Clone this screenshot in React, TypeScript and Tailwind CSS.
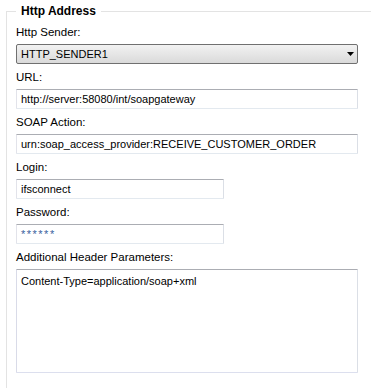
const font = { fontFamily: '"Liberation Sans", Arial, sans-serif' };

const Label = ({ text }: { text: string }) => (
  <div className="h-4 mb-1 text-[11.5px] leading-4 text-black">{text}</div>
);

const TextBox = ({ value, className = "" }: { value: string; className?: string }) => (
  <div
    className={`h-5 mb-[5px] box-border border border-t-[#abadb3] border-l-[#e2e3ea] border-r-[#dbdfe6] border-b-[#e3e9ef] rounded-[1px] bg-white pl-[4px] text-[11px] leading-[18px] text-black whitespace-nowrap overflow-hidden ${className}`}
  >
    {value}
  </div>
);

export default function App() {
  return (
    <div className="w-[371px] h-[388px] bg-white overflow-hidden" style={font}>
      <fieldset className="ml-[6px] mt-[3px] h-[400px] border-t border-l border-[#e3e3e3] pl-[9px] pr-[13px] pt-[5px]">
        <legend className="px-[5px] text-[12px] leading-4 font-bold text-black">Http Address</legend>

        <Label text="Http Sender:" />
        <div className="h-5 mb-[5px] box-border flex items-center justify-between rounded-[2px] border border-[#707070] bg-gradient-to-b from-[#f2f2f2] to-[#dadada] pl-[4px] pr-[3px] text-[11px] text-black">
          <span>HTTP_SENDER1</span>
          <svg width="7" height="4" viewBox="0 0 7 4">
            <path d="M0 0 H7 L3.5 4 Z" fill="#000" />
          </svg>
        </div>

        <Label text="URL:" />
        <TextBox value="http://server:58080/int/soapgateway" />

        <Label text="SOAP Action:" />
        <TextBox value="urn:soap_access_provider:RECEIVE_CUSTOMER_ORDER" />

        <Label text="Login:" />
        <TextBox value="ifsconnect" className="w-[208px]" />

        <Label text="Password:" />
        <TextBox value="******" className="w-[208px] !text-[#3a5f9e] tracking-[1.5px]" />

        <Label text="Additional Header Parameters:" />
        <div className="h-[104px] box-border border border-t-[#abadb3] border-l-[#d9dbe8] border-r-[#dbdfe6] border-b-[#dcdfee] rounded-[1px] bg-white pl-[4px] pt-[3px] text-[11px] leading-4 text-black">
          Content-Type=application/soap+xml
        </div>
      </fieldset>
    </div>
  );
}
